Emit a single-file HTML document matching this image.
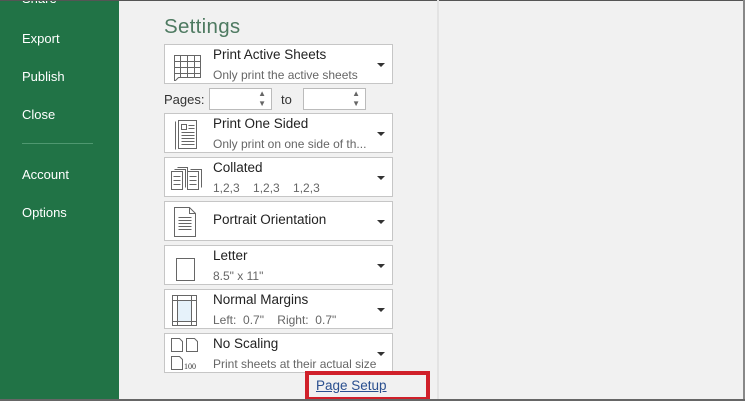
<!DOCTYPE html>
<html><head><meta charset="utf-8"><style>
*{margin:0;padding:0;box-sizing:border-box}
body{width:745px;height:401px;overflow:hidden;background:#f1f1f1;font-family:"Liberation Sans",sans-serif;position:relative}
.side{position:absolute;left:0;top:0;width:119px;height:401px;background:#217346;color:#fff;font-size:13px}
.side div{position:absolute;left:22px}
.hr{position:absolute;left:22px;top:143px;width:71px;height:1px;background:#4f9870}
.top{position:absolute;left:0;top:0;width:745px;height:1px;background:#555}
.bot{position:absolute;left:0;top:399px;width:745px;height:2px;background:#666}
.rb{position:absolute;left:743px;top:0;width:2px;height:401px;background:#888}
.div{position:absolute;left:437px;top:0;width:2px;height:401px;background:#e3e3e3}
h1{position:absolute;left:164px;top:15px;font-weight:normal;font-size:20.5px;color:#4e7a61;letter-spacing:.3px}
.box{position:absolute;left:164px;width:229px;height:40px;background:#fff;border:1px solid #c6c6c6}
.box .t{position:absolute;left:48px;top:2px;font-size:13.5px;color:#222}
.box .s{position:absolute;left:48px;top:23px;font-size:12px;color:#666}
.box .a{position:absolute;right:7px;top:18px;width:0;height:0;border-left:4px solid transparent;border-right:4px solid transparent;border-top:4px solid #333}
.box svg{position:absolute;left:5px;top:4px}
.pg{position:absolute;top:88px;font-size:13px;color:#333}
.spin{position:absolute;top:88px;width:63px;height:22px;background:#fff;border:1px solid #bbb}
.spin:after{content:"▲\A▼";white-space:pre;position:absolute;right:5px;top:0px;font-size:8px;line-height:10px;color:#666}
.red{position:absolute;left:305px;top:371px;width:125px;height:30px;border:4px solid #d0202a}
.red span{position:absolute;left:7px;top:3px;font-size:13.5px;color:#2a4f8f;text-decoration:underline}
</style></head><body>
<div class="side">
<div style="top:-9px">Share</div>
<div style="top:31px">Export</div>
<div style="top:69px">Publish</div>
<div style="top:107px">Close</div>
<span class="hr"></span>
<div style="top:167px">Account</div>
<div style="top:205px">Options</div>
</div>
<div class="top"></div><div class="div"></div><div class="rb"></div>
<h1>Settings</h1>

<div class="box" style="top:44px"><svg width="32" height="32" fill="none" stroke="#666" stroke-width="1"><path d="M4.5 6.5h26v22h-22l-4 4zM4.5 12.5h26M4.5 18.5h26M4.5 24.5h26M10.5 6.5v22M17.5 6.5v22M24.5 6.5v22M4.5 28.5v4"/></svg><div class="t">Print Active Sheets</div><div class="s">Only print the active sheets</div><i class="a"></i></div>

<div class="pg" style="left:164px;top:92px">Pages:</div>
<div class="spin" style="left:209px"></div>
<div class="pg" style="left:281px;top:92px">to</div>
<div class="spin" style="left:303px"></div>

<div class="box" style="top:113px"><svg width="32" height="32" fill="none" stroke="#666"><path d="M5.5 3.5v28M8.5 2.5h18v28h-18zM11.5 6.5h5v5h-5zM18.5 7.5h6M18.5 10.5h6M11.5 14.5h13M11.5 17.5h13M11.5 20.5h13M11.5 23.5h13M11.5 26.5h13"/></svg><div class="t">Print One Sided</div><div class="s">Only print on one side of th...</div><i class="a"></i></div>

<div class="box" style="top:157px"><svg width="34" height="32" fill="none" stroke="#666"><path d="M1.5 9.5h11v18h-11zM4.5 7.5h11v18M7.5 5.5h10v18M17.5 9.5h11v18h-11zM20.5 7.5h11v18M3.5 14.5h7M3.5 18.5h7M3.5 22.5h7M19.5 14.5h7M19.5 18.5h7M19.5 22.5h7"/></svg><div class="t">Collated</div><div class="s">1,2,3&nbsp;&nbsp;&nbsp;&nbsp;1,2,3&nbsp;&nbsp;&nbsp;&nbsp;1,2,3</div><i class="a"></i></div>

<div class="box" style="top:201px"><svg width="32" height="32" fill="none" stroke="#666"><path d="M4.5 1.5h15l6 6v23h-21zM19.5 1.5v6h6M8.5 11.5h13M8.5 14.5h13M8.5 17.5h13M8.5 20.5h13M8.5 23.5h13"/></svg><div class="t" style="top:10px">Portrait Orientation</div><i class="a"></i></div>

<div class="box" style="top:245px"><svg width="32" height="32" fill="none" stroke="#666"><path d="M6.5 8.5h18v22h-18z"/></svg><div class="t">Letter</div><div class="s">8.5" x 11"</div><i class="a"></i></div>

<div class="box" style="top:289px"><svg width="32" height="32" fill="none" stroke="#666"><rect x="7" y="6" width="14" height="22" fill="#e6f2fa" stroke="none"/><path d="M2.5 1.5h24v30h-24zM2.5 6.5h24M2.5 27.5h24M7.5 1.5v30M21.5 1.5v30"/></svg><div class="t">Normal Margins</div><div class="s">Left:&nbsp; 0.7"&nbsp;&nbsp;&nbsp;&nbsp;Right:&nbsp; 0.7"</div><i class="a"></i></div>

<div class="box" style="top:333px"><svg width="40" height="34" fill="none" stroke="#666"><path d="M1.5 0.5h8l3 3v10h-11zM16.5 0.5h8l3 3v10h-11zM1.5 18.5h8l3 3v10h-11z"/><text x="14" y="31" font-size="8" fill="#333" stroke="none" font-family="Liberation Serif">100</text></svg><div class="t">No Scaling</div><div class="s">Print sheets at their actual size</div><i class="a"></i></div>

<div class="red"><span>Page Setup</span></div>
<div class="bot"></div>
</body></html>
